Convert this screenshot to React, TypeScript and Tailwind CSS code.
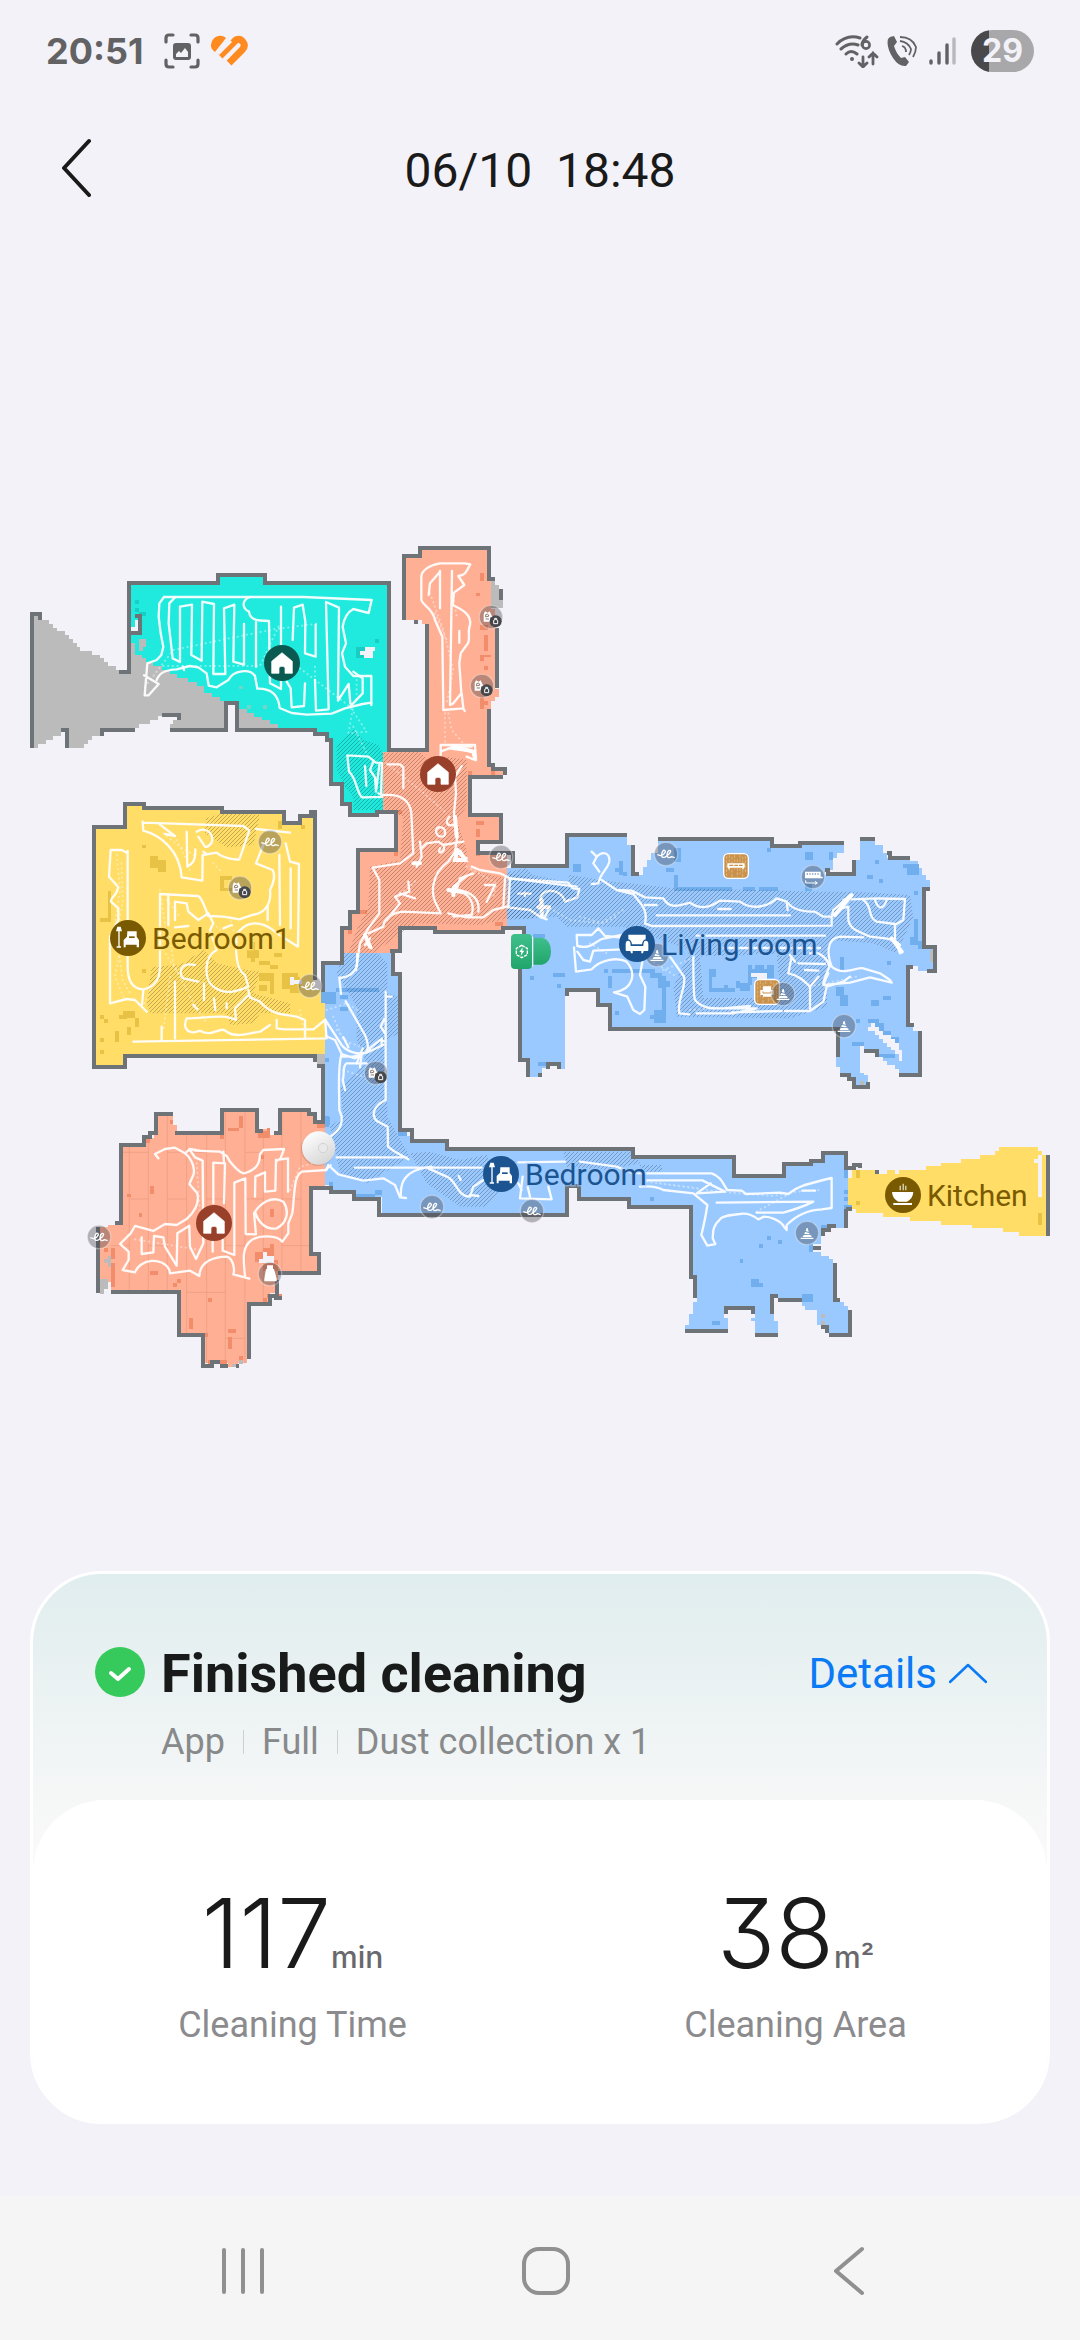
import type { ReactNode } from 'react'

const C = {
  bg: '#F3F2F8',
  wall: '#6E7377',
  grey: '#BBBBBB',
  teal: '#20E9DE',
  blue: '#99C9FF',
  blueDark: '#70AEEE',
  orange: '#FFB094',
  orangeDark: '#F28D6C',
  yellow: '#FFDD66',
  yellowDark: '#E8C245',
}

type Rect = [number, number, number, number]

// Map tiles are drawn on a grid three times finer than the map itself
function Tile({ x, y, children }: { x: number; y: number; children: ReactNode }) {
  return <g transform={`translate(${x} ${y}) scale(0.33333)`}>{children}</g>
}

function Wall({ d }: { d: string }) {
  return <path d={d} fill="none" stroke={C.wall} strokeWidth={12} shapeRendering="crispEdges" />
}

function Fill({ d, color }: { d: string; color: string }) {
  return <path d={d} fill={color} shapeRendering="crispEdges" />
}

function Cells({ items, color }: { items: Rect[]; color: string }) {
  return (
    <g fill={color} shapeRendering="crispEdges">
      {items.map(([x, y, w, h]) => (
        <rect key={`${x}-${y}`} x={x} y={y} width={w} height={h} />
      ))}
    </g>
  )
}

function Hatch({ d }: { d: string }) {
  return <path d={d} fill="url(#hatch)" />
}

function Track({ d }: { d: string }) {
  return (
    <path d={d} fill="none" stroke="#fff" strokeWidth={7} strokeOpacity={0.92} strokeLinejoin="round" strokeLinecap="round" />
  )
}

function Dots({ d }: { d: string }) {
  return (
    <path d={d} fill="none" stroke="#fff" strokeWidth={6} strokeOpacity={0.4} strokeDasharray="1 13" strokeLinecap="round" />
  )
}

function Floors() {
  return (
    <>
      {/* Teal room and the unexplored area beside it */}
      <Tile x={20} y={540}>
        <Fill color={C.grey} d="M42 228H66V240H87V252H99V264H111V273H135V285H147V297H159V309H171V321H180V333H216V345H240V354H252V366H264V378H288V390H333V309H400V370H774V564H648V490H618V564H450V552H459V540H471V528H414V540H390V552H357V564H240V588H216V600H204V612H192V624H147V570H123V588H99V600H78V612H54V624H42Z" />
        <Fill color={C.teal} d="M333 135H600V111H729V135H1101V636H1089V822H995V788H970V735H936V600H920V576H885V564H774V552H750V540H727V530H703V518H680V507H656V484H600V472H576V460H552V437H530V426H505V413H470V402H450V390H426V378H400V366H378V354H365V345H345V309H333Z" />
        <Fill color={C.bg} d="M318 262H345V240H357V273H318Z" />
        <Cells color="#18CDC2" items={[[345, 180, 12, 12], [345, 204, 12, 12], [357, 216, 21, 12], [1008, 320, 28, 34], [1065, 297, 12, 12]]} />
        <Cells color={C.grey} items={[[357, 297, 21, 24], [357, 320, 12, 12]]} />
        <Cells color="#70D6CC" items={[[657, 437, 12, 10], [681, 495, 12, 12], [729, 495, 13, 12]]} />
        <Fill color={C.bg} d="M1020 332H1036V320H1065V332H1060V354H1032V345H1020Z" />
        <Hatch d="M1000 565L1030 600 1075 615 1089 640V810H1000V770L975 740 950 690 950 620Z" />
        <Wall d="M36 624V222H60V240" />
        <Wall d="M297 396H327V129H594V105H735V129H1107V630H1140" />
        <Wall d="M321 278H360V228H345" />
        <Wall d="M141 624V570H123M246 588V570H345M426 525H477V540M450 570H618V490H652V570H885V582H921V600H932V733H966V792H990V826H1071V816H1119" />
        <Dots d="M375 440L460 330 760 268 900 250M430 378H720L780 250M840 385L990 500 1040 575 985 580 1000 500M885 380V430M1010 420V490M1000 560L1040 640" />
        <Track d="M432 171L418 190 416 230 422 280 430 320 424 345 410 360 382 370 374 466H386L416 432 372 406M410 420C420 395 440 390 470 388L510 378 535 382 560 400 566 437 590 442 625 420C640 390 690 385 705 408L712 446C750 445 775 460 779 504L815 519 860 524 935 521 975 505 1028 492 1054 488V408H1000L975 380 966 340 978 310 968 260C972 235 985 215 1000 207L1046 219 1055 180 850 171H432" />
        <Track d="M466 171L448 190 446 250 458 355 480 366 480 200 516 194 514 345 545 362 547 185 582 192 580 402H616L612 205 643 194 640 365 672 374V252M690 171C665 180 665 205 687 215 690 240 710 243 747 243L750 430 783 447V200M708 247V380M800 425L812 445 815 502 852 498 855 430M818 300L822 203 848 194 856 245 855 340 887 350V254M885 420L888 512 926 508 918 186 957 203 954 482 986 432 991 490M1000 395L1028 415V460L990 500M1054 488V495M490 380L492 390" />
        <Track d="M982 646L1045 650 1068 668 1140 672M982 646L987 695C1010 715 1010 760 1026 772L1140 770M1035 678L1039 738M1060 665L1050 690 1065 712 1068 755 1078 675M1083 765L1086 675H1102L1092 765 1075 760" />
      </Tile>

      {/* Hallway, second bedroom */}
      <Tile x={300} y={930}>
        <Fill color={C.blue} d="M132 65H275V130H295V605H320V617H335V637H440V660H1000V685H1090V830H990V800H840V770H800V850H245V800H165V780H92V765H70V185H75V98H132Z" />
        <Fill color={C.yellow} d="M0 0H39V205H64V222H75V373H0Z" />
        <Cells color={C.grey} items={[[51, 373, 24, 36]]} />
        <Cells color={C.blueDark} items={[[108, 174, 130, 12], [64, 186, 44, 36], [120, 195, 24, 12], [120, 232, 24, 12], [75, 383, 12, 12], [75, 560, 14, 24], [225, 780, 20, 14], [165, 792, 60, 10], [295, 605, 25, 12], [690, 138, 12, 12], [1050, 800, 12, 12]]} />
        <Hatch d="M132 70H235L262 100V190L295 200V310L262 330V560L330 680 200 760 120 730 90 590 130 560 120 470 200 400 170 330 170 230 110 130Z" />
        <Hatch d="M330 670L390 665 480 690 560 675 600 780 560 830 480 830 380 760ZM790 665H1000L1020 700 920 720 800 710Z" />
        <Wall d="M69 185V98H126V0M45 0V150M300 0V62H279V133H300V600H335V632H441V657H998V681H1080" />
        <Wall d="M0 378H45V395M51 408H69V575H45V552H26V540H0M34 900V774H92V786H163V807H237V855H801V768H837V806H987V831H1080" />
        <Dots d="M80 240L140 220 190 250M100 260L130 330 180 350M110 300L150 345M130 420L190 440" />
        <Track d="M200 20L172 60 171 105C165 130 140 145 118 143L123 192M137 214L195 315C205 340 205 355 200 362L240 330 255 335M257 185V510C215 530 215 560 232 574L263 590 264 650 280 662 325 688M257 200H275M252 268L242 290 255 310M75 268L125 345C140 365 170 375 200 368L250 345M75 268L77 318 105 330 125 372 165 385 210 360M125 372C112 410 118 480 118 540L125 560C128 595 105 610 88 622M128 380H160L185 372 180 412M200 400H140C125 410 135 430 128 450L135 480M110 682H320M165 713H545M90 710L115 733 190 752 250 745 285 765 300 802 318 804M303 800C300 760 310 720 395 710L385 715 440 740C470 750 470 800 510 800L520 770 550 750M510 795L535 798M476 738L482 750M0 728L75 720 92 706" />
        <Track d="M130 322L145 352M188 355L170 400M245 345V325M655 697L795 695M668 740L660 805 755 808 745 770M683 770L690 800M655 760L665 780M840 695L950 710 1000 730 1080 725M1040 750H1080" />
      </Tile>

      {/* Yellow bedroom */}
      <Tile x={80} y={790}>
        <Fill color={C.yellow} d="M48 118H141V48H188V60H425V72H607V100H660V82H690V72H699V600H723V640H735V793H130V827H48Z" />
        <Cells color={C.yellowDark} items={[[186, 165, 12, 10], [210, 198, 24, 36], [234, 210, 24, 35], [84, 303, 9, 93], [60, 383, 24, 13], [420, 258, 36, 45], [594, 93, 12, 24], [662, 105, 13, 12], [186, 537, 12, 12], [60, 675, 12, 12], [72, 687, 12, 12], [130, 662, 35, 23], [118, 675, 24, 12], [165, 685, 12, 26], [105, 723, 12, 32], [142, 711, 11, 24], [60, 744, 12, 12], [60, 780, 12, 12], [502, 480, 36, 24], [514, 455, 12, 60], [538, 513, 32, 12], [582, 489, 24, 12], [570, 525, 24, 12], [537, 548, 45, 24], [570, 560, 12, 52], [537, 584, 25, 20], [607, 548, 48, 50], [630, 560, 30, 50]]} />
        <Cells color={C.yellow} items={[[432, 270, 24, 24]]} />
        <Cells color={C.bg} items={[[630, 560, 12, 24], [630, 570, 36, 12]]} />
        <Hatch d="M378 85L430 70 540 75 520 165 440 172 375 130ZM215 530L300 525 370 480 410 520 500 540 540 545 520 610 630 640V670H540L520 700 450 705 440 670H210L200 640Z" />
        <Wall d="M42 832V111H135V42H192V54H426V66H612V98H660V77H692V66H705V550" />
        <Wall d="M36 832H135V798H705V815" />
        <Dots d="M110 195L120 300 105 400 120 480 105 560 130 620M240 300L255 400 245 480M250 130L300 170 350 200M260 330L300 380M400 400L440 440 450 480M250 480L300 560M660 660L670 720M270 560L250 720M210 600L190 650M420 240L400 220M450 380L470 460" />
        <Dots d="M125 220L128 340 112 420M118 500L128 570 150 610M290 150L320 210 330 240M270 440L280 520 320 600M330 620L380 700" />
        <Track d="M188 95L190 122C240 135 300 180 305 262L367 272 368 195 410 188C430 205 465 210 478 208L508 122 490 108 190 98M235 100L285 138 255 132M320 125L322 230C335 222 347 215 346 178M350 125C365 115 390 115 397 145 398 165 380 172 375 170L355 140M370 185L380 192M630 128L528 117M550 165L528 220 578 240C588 260 580 280 570 300 575 340 555 370 520 374L478 388 430 380 385 378C370 340 362 315 350 318L240 312V530C240 580 210 595 190 598 165 597 143 580 143 530V183M143 190L125 180 92 180 87 260 114 290C112 320 90 320 93 335L115 355V390L90 440V640L140 627 165 630 200 665M190 600L186 645M598 195L600 405M617 160L630 215 657 222 654 470 590 430C560 400 520 390 490 412M632 235V415" />
        <Track d="M265 318V405M285 390V335L320 340 325 365 355 390 385 370 400 400 390 420 410 480C370 500 372 570 400 590 440 620 480 600 505 590L495 555C470 540 465 490 470 430L490 412M505 600L510 622 540 635C580 680 620 672 650 680L675 690V745M505 615L465 655 468 690C430 670 380 685 320 685 305 720 330 735 360 722 400 745 420 705 440 725 470 745 500 730 540 725L570 705M590 690V715L612 718H700L735 690 740 745 160 755M285 575V745M245 710V750M345 525C300 515 295 550 310 565L355 575M372 580V630M402 625L406 660M340 645L352 658M440 640V655M430 415L455 405M563 350V390M285 412L325 408" />
      </Tile>

      {/* Living room */}
      <Tile x={490} y={820}>
        <Fill color={C.blue} d="M50 145H237V51H411V75H423V165H460V140H470V120H483V98H505V63H845V82H930V75H1062V98H1040V115H1030V150H1005V165H1097V120H1110V63H1155V75H1178V98H1190V115H1260V123H1283V145H1295V165H1308V180H1320V204H1297V375H1330V447H1310V454H1285V437H1248V612H1270V633H1285V760H1228V747H1215V735H1192V723H1180V711H1168V700H1122V765H1134V795H1095V782H1085V770H1050V740H1038V627H366V560H330V515H225V747H210V735H170V745H155V770H118V725H95V330H50Z" />
        <Cells color={C.blueDark} items={[[250, 133, 22, 22], [388, 122, 12, 44], [376, 143, 12, 12], [400, 155, 12, 12], [552, 85, 20, 40], [528, 143, 24, 12], [552, 165, 12, 48], [564, 202, 161, 11], [760, 202, 35, 11], [808, 202, 55, 11], [831, 85, 12, 11], [945, 96, 24, 23], [945, 190, 20, 23], [1017, 96, 12, 23], [1155, 120, 12, 12], [1130, 165, 18, 12], [1168, 177, 12, 12], [1238, 133, 50, 12], [1250, 145, 36, 21], [1272, 213, 12, 12], [1272, 296, 12, 78], [1260, 350, 12, 24], [1285, 363, 12, 24], [1192, 423, 12, 12], [120, 468, 12, 12], [190, 459, 35, 12], [201, 492, 12, 12], [342, 447, 12, 12], [366, 447, 130, 12], [354, 468, 12, 35], [480, 459, 35, 16], [505, 468, 22, 36], [515, 492, 13, 110], [528, 483, 12, 18], [480, 586, 24, 10], [492, 570, 36, 38], [376, 573, 11, 12], [1050, 411, 12, 40], [1038, 500, 24, 28], [1050, 525, 24, 34], [1143, 540, 25, 18], [1180, 528, 23, 12], [1097, 597, 12, 12], [1134, 597, 34, 12], [1155, 609, 26, 24], [1180, 633, 24, 24], [1192, 650, 36, 26], [1168, 702, 47, 12], [1087, 667, 35, 11], [145, 727, 24, 12], [130, 342, 36, 12]]} />
        <Fill color={C.bg} d="M1143 609H1155V621H1168V633H1180V645H1204V657H1216V669H1228V690H1237V723H1228V702H1216V690H1204V680H1192V669H1180V657H1168V645H1155V633H1134V621H1143ZM1110 678H1122V700H1168V711H1180V723H1192V735H1215V760H1110Z" />
        <Hatch d="M55 155L110 145 130 165 230 185 240 165 370 185 420 190 550 205 1000 215 1100 215 1260 225 1270 290 1220 400 1150 370 1020 360 1010 560 900 595 560 590 550 500 600 390 400 320 230 320 200 290 50 300Z" />
        <Fill color={C.blue} d="M630 410L860 400 870 500 800 535 640 535Z" />
        <Cells color={C.blueDark} items={[[658, 447, 19, 24], [657, 471, 10, 44], [665, 504, 70, 12], [702, 494, 12, 12], [737, 482, 12, 22], [750, 490, 30, 24], [773, 435, 12, 12], [796, 435, 25, 12], [832, 435, 20, 12], [773, 447, 78, 28], [773, 475, 12, 20]]} />
        <Fill color={C.bg} d="M782 459H830V483H800V470H782Z" />
        <Wall d="M70 108V138H231V45H411M429 75V161H447M505 57H846V78H930V69H1062M1005 150H1014V161H1091V120M1110 57H1155M1190 98H1200V114H1260M1320 208H1303V380H1334V453H1310M1270 441H1254V615H1272M1290 633V765H1228M1122 694H1160V712M1134 785V801H1092V776H1078V765H1050M1044 710V627H360V555H324V510H231V527" />
        <Wall d="M0 329H21V323H101V342M91 447V720H114V770M145 765H155M168 740H174V733H207V747" />
        <Cells color={C.grey} items={[[1320, 390, 8, 36], [1110, 783, 12, 12]]} />
        <Dots d="M180 265L240 300 330 310 400 270M270 290L340 310 380 290M300 370L350 400M480 420L560 470M600 570L760 560M960 500L1100 470M520 450L620 410" />
        <Track d="M55 175L235 188 248 205 268 207 262 232 225 245C215 205 155 200 150 240M150 255L178 265 165 290M55 262L120 270 150 290 170 298M105 218V228M85 221H122M305 95L320 110C340 90 360 100 358 125 355 145 330 160 325 190L305 192M320 110L310 130 328 155M335 180L380 210 430 222C450 250 475 265 465 310L485 318 1025 317 1025 290M380 210L425 212 465 232 520 235C540 270 570 255 600 248 640 275 670 255 690 242L750 245C790 275 840 255 860 235L890 245 893 270M895 250C910 270 940 275 975 275L1000 290H1025L1030 270 1085 228 1060 240M1025 290L1055 265 1075 260V300C1080 330 1110 335 1140 350 1180 355 1215 355 1230 375M1030 270L1080 225M500 286H900M465 255H500M685 267H722M620 347H1005M700 384H990M1085 238L1160 235 1245 237 1240 300 1215 315V360L1230 400M1120 240C1150 260 1130 290 1160 305L1215 312M1155 240C1165 270 1180 270 1190 240" />
        <Track d="M260 345H305L325 325 345 348 390 352 405 340M260 345L262 378C310 390 320 355 345 355L395 345M252 382L258 455 305 448C330 420 380 410 410 425 440 460 430 510 372 517L412 530 430 570 450 582 463 570 466 500 450 465 458 420M262 395L280 420 300 425 310 392 400 388M540 410L582 470C590 500 560 540 568 580L598 583M610 400C610 450 610 530 615 540 640 570 680 565 700 565L780 558M620 580L730 580 800 565 700 565M725 577L875 573M885 573H960L1000 545 1010 500 1060 485 1080 470M960 570V500M905 410L895 460C925 465 945 485 960 500L985 470M900 405L915 425M960 400C990 390 1015 420 1018 440 1010 460 1000 480 1000 492M925 430L1005 432M945 450L985 452M1025 440C1010 400 1010 355 1050 350L1120 352M1025 440C1060 470 1100 440 1120 445L1170 460 1200 480 1205 488 1140 472 1080 488 1000 495 1015 460" />
        <path d="M1035 285L1085 225M1205 355L1235 395M155 240V290M145 262H178" fill="none" stroke="#fff" strokeWidth={12} strokeLinecap="round" />
      </Tile>

      {/* Entrance corridor */}
      <Tile x={320} y={530}>
        <Fill color={C.grey} d="M513 153H525V165H537V178H549V235H513ZM270 258H294V270H270Z" />
        <Fill color={C.orange} d="M306 60H504V153H513V237H525V477H537V500H525V513H513V537H504V712H525V724H549V736H444V861H537V937H468V966H561V1189H549V1200H345V1189H234V1268H72V1200H84V1175H96V1150H120V966H234V841H188V665H327V283H306V270H258V84H306Z" />
        <Cells color={C.orangeDark} items={[[480, 129, 12, 24], [468, 188, 12, 10], [480, 285, 24, 16], [492, 315, 12, 48], [480, 375, 33, 7], [480, 382, 12, 12], [492, 408, 12, 12], [480, 500, 12, 36], [492, 513, 12, 12], [468, 873, 24, 12], [468, 897, 12, 24], [513, 724, 12, 12], [444, 724, 12, 12], [212, 841, 34, 11], [222, 966, 12, 12], [468, 966, 12, 12], [120, 1140, 21, 12], [84, 1200, 12, 12], [525, 1177, 24, 12]]} />
        <Hatch d="M190 668L300 665 330 700 380 680 440 690V830L410 870 440 960V1020L561 1045V1165L480 1185 290 1180 160 1268H85L110 1200 145 1130 150 1010 240 990 250 860 190 835ZM561 1030L625 1040 740 1065 780 1100 700 1130 640 1165H561Z" />
        <Wall d="M252 270V78H300V54H508V147H525M543 178V210M282 276H294M315 289H321V659H206M531 295V475M508 537V706H519V718H555V735M549 741H450V856H543V937H474V970H578V1008H741V916H780" />
        <Wall d="M177 847H228V960H114V1146H90V1195H66V1298H9V1320M217 1268V1262H240V1195H345V1206H549V1195H612V1212" />
        <Dots d="M330 190L370 300 400 420 380 520M345 250L380 330M400 200L410 260M375 550V640M385 550L395 600 430 640M200 700L300 780 380 850M440 1010L530 1060 520 1100M230 1100L290 1050 260 1080" />
        <Track d="M360 100H435L451 103C440 120 440 135 415 138L433 165 402 188 398 225C430 240 455 255 450 285 440 310 455 330 440 345L422 370 418 400 424 490 400 520 390 525 396 123M360 100C330 105 305 120 304 140V210C310 230 335 230 345 270L367 320 370 540 430 535 425 490M360 123V235M360 125L330 160 326 195M418 303V338M430 535L434 543M362 680V645H465L468 690M362 665L400 650M385 655L460 665M395 650H455M440 680L465 690" />
        <Track d="M203 703H240L250 712V775M190 795C250 790 270 815 274 850L280 970 240 1000 158 1013 178 1050V1150L145 1195 120 1240 108 1320M425 708L405 740 408 790 402 850 412 920 405 965 440 985M388 860C375 875 380 890 400 885M348 905C350 885 375 890 375 905 380 925 350 925 348 905M360 955C350 975 375 970 372 950M300 935L305 980 290 1010M305 955L320 940 355 935 370 945 430 935M405 965L385 995C335 1030 330 1090 350 1125L362 1150 250 1145C210 1150 190 1170 190 1190L145 1210M265 1055L268 1085 225 1100 240 1120 200 1170M240 1090L285 1105M455 1010L480 1020 540 1030 570 1045 770 1070M440 1038L400 1070 395 1085C450 1080 465 1120 455 1155L400 1160M460 1030L420 1045 410 1080C460 1085 480 1110 475 1145M495 1065L525 1065 500 1115M385 1150L440 1162 490 1162 520 1140 560 1130M555 1045L550 1130M570 1045L565 1130M135 1245L150 1225M140 1240L155 1255" />
        <path d="M400 650L460 665 465 685M385 1080L425 1085M405 1070L400 1095M412 960L405 990 435 990 420 965M280 1000H300M405 860L410 920M135 1215L150 1250" fill="none" stroke="#fff" strokeWidth={12} strokeLinecap="round" />
      </Tile>

      {/* Orange room */}
      <Tile x={80} y={1080}>
        <Fill color={C.orange} d="M234 108H279V135H290V155H300V165H432V96H525V147H560V165H606V96H680V105H700V130H725V135H735V318H687V525H710V573H594V640H570V665H501V850H475V860H445V850H370V770H303V640H93V605H60V440H84V435H129V200H195V175H222V160H234Z" />
        <path d="M148 200V640M205 165V640M262 108V640M320 165V770M380 165V850M436 96V850M495 96V850M550 160V665M606 96V573M663 96V573M129 217H205M262 217H380M495 217H550M148 357H205M262 357H320M380 357H436M495 357H550M606 357H663M93 497H148M205 497H262M436 497H495M606 497H687M148 637H262M320 637H436M436 775H495" fill="none" stroke="#E8967C" strokeWidth={3} strokeOpacity={0.6} />
        <Cells color={C.orangeDark} items={[[270, 120, 10, 12], [477, 108, 12, 36], [444, 143, 33, 10], [420, 165, 12, 11], [535, 153, 36, 22], [560, 145, 10, 12], [198, 176, 12, 13], [210, 318, 12, 24], [141, 342, 12, 10], [177, 399, 10, 12], [570, 387, 12, 24], [541, 225, 12, 12], [93, 504, 12, 32], [93, 550, 12, 70], [72, 504, 12, 12], [210, 573, 24, 12], [291, 597, 12, 12], [279, 609, 12, 12], [384, 654, 12, 12], [327, 714, 12, 32], [444, 747, 24, 12], [444, 771, 12, 35], [372, 759, 12, 12], [525, 516, 57, 30], [550, 504, 32, 14], [571, 493, 11, 12], [550, 540, 44, 32], [594, 642, 12, 12], [560, 642, 12, 12], [550, 654, 12, 11], [711, 130, 24, 14], [384, 841, 12, 12], [420, 840, 22, 12], [477, 828, 12, 12]]} />
        <Cells color={C.grey} items={[[60, 597, 24, 30], [60, 625, 12, 16], [72, 538, 12, 10], [84, 528, 8, 32], [477, 840, 12, 12], [456, 852, 12, 10]]} />
        <Fill color={C.bg} d="M550 516H560V528H582V550H538V538H550Z" />
        <Cells color={C.blueDark} items={[[735, 108, 12, 34], [747, 306, 12, 14]]} />
        <Wall d="M279 102H228V159H210V171H192V195H123V429H105M291 153V159H426V90H531V153H550M582 159H600V90H687V102H705V125H730V0M54 640V440M93 636H297V765H369V857H396V847H420M420 857H444M468 857H477M507 838V671H570V648H590V600M582 655H606M594 579H717V522H692V324H753V336H780" />
        <Dots d="M165 478L360 510M350 250L360 400M630 330L660 260 700 250" />
        <Track d="M235 235L225 222 255 207 285 203 315 220C340 240 345 270 340 285L328 312 352 340C360 370 340 400 320 417L290 435 255 432 220 453 165 438 152 460 120 492 146 515V540L128 570 165 577C180 535 250 530 268 570L270 580 330 572 358 588C360 540 410 530 440 530 460 535 465 570 460 583L508 596M495 588C490 540 485 500 515 480 540 465 590 465 607 485L625 460V430L637 400C645 340 640 290 665 275L740 270 745 255M315 220L330 207 358 212M328 207L345 232 368 242 370 490 348 537 330 500 328 437 292 460 290 557 255 500 250 472 222 468 220 517 185 522V472M345 212L420 215 440 228C450 250 480 280 492 280 530 270 540 250 540 222L550 210 612 207 602 235 588 245M400 370V248L435 250 432 370M428 480V512L463 525V308L496 295 497 462 528 463 522 400C540 370 575 345 610 365 630 395 620 430 590 445 560 450 535 430 525 395M398 485V515M525 350L526 290 555 277V335L586 332 588 240 624 235V335M430 215L432 245" />
      </Tile>

      {/* Bedroom end and kitchen */}
      <Tile x={640} y={1110}>
        <Fill color={C.blue} d="M0 147H276V204H438V169H519V159H549V135H612V180H624V300H612V354H588V345H543V402H519V425H543V437H567V447H579V575H612V588H624V670H567V657H545V645H531V600H495V588H486V563H402V633H414V670H345V633H333V624H345V600H252V624H264V657H135V645H147V612H159V575H171V500H159V285H0Z" />
        <Fill color={C.yellow} d="M624 204H636V169H648V180H705V192H741V180H765V192H778V180H858V169H903V159H963V147H1020V135H1065V123H1077V111H1194V123H1206V135H1218V378H1137V366H1089V354H996V345H903V333H810V320H729V309H648V297H624Z" />
        <Fill color={C.bg} d="M1194 135H1206V262H1194V159H1182V147H1194Z" />
        <Cells color={C.blueDark} items={[[30, 261, 12, 12], [612, 180, 12, 24], [612, 240, 12, 12], [612, 261, 12, 11], [612, 285, 24, 12], [381, 378, 12, 12], [357, 402, 12, 12], [414, 390, 12, 12], [300, 447, 9, 12], [333, 507, 24, 24], [357, 519, 12, 12], [216, 633, 24, 12], [486, 552, 33, 24], [543, 345, 24, 20], [507, 402, 12, 24]]} />
        <Cells color={C.yellowDark} items={[[648, 180, 12, 24], [648, 273, 12, 12], [1194, 309, 12, 36]]} />
        <Cells color={C.grey} items={[[543, 612, 12, 12], [543, 633, 12, 12]]} />
        <Hatch d="M0 165H66V185H0Z" />
        <Wall d="M0 141H282V198H432V163H513V153H549V129H618V174H648M636 165H660V175M705 186H717M618 297H636M618 297V354M588 349H567V359H549V378M519 413H543M584 459V570H600M630 600V675H567M549 645V651H561V669M414 675H345M339 612V594H258V612M264 663H135M165 563V500H153V291H0M397 612V558H414M414 570H486M1224 135V378" />
        <Dots d="M20 215L240 245 400 258 470 245 540 240M350 305L450 250M60 220L180 235" />
        <Track d="M0 190H215C245 200 250 225 262 240L305 242 318 252 420 248 445 252C470 230 490 225 575 204V294L545 298C500 300 470 315 440 345V360L432 350C420 330 390 320 372 320L355 328C330 310 310 310 300 312 270 315 245 318 240 328 215 350 220 370 218 385L226 402 202 407 184 375C195 330 200 300 202 285L160 250 70 240C50 228 20 228 0 230M20 211H187L255 245 170 250 212 220M230 278L520 275C490 290 460 300 430 308H350M487 242H525" />
      </Tile>
    </>
  )
}

function HomeGlyph() {
  return <path d="M0 -31L31 -5V31H9V16Q9 10 0 10T-9 16V31H-31V-5Z" fill="#fff" stroke="#fff" strokeWidth={2} strokeLinejoin="round" />
}

function BedGlyph() {
  return (
    <g fill="#fff">
      <path d="M-32 -34H-22L-18 -20H-25V25H-21V29H-34V25H-29V-20H-36ZM-2 -20H26V-4L33 6V28H26V20H-7V28H-13V6L-3 -4Z" />
      <path d="M3 -5H20V0H3Z" fill="currentColor" />
    </g>
  )
}

function SofaGlyph() {
  return (
    <g fill="#fff">
      <path d="M-26 -28H26V-14Q17 -12 15 1H-15Q-17 -12 -26 -14Z" />
      <path d="M-26 -10Q-19 -10 -19 6H19Q19 -10 26 -10Q34 -10 34 0V18Q34 21 31 21H20L18 28H13V21H-13V28H-18L-20 21H-31Q-34 21 -34 18V0Q-34 -10 -26 -10Z" />
    </g>
  )
}

function BowlGlyph() {
  return (
    <g fill="#fff">
      <path d="M-33 -9H31Q30 10 12 20H-14Q-32 10 -33 -9ZM-29 24H27V30H-29ZM-10 -28H-7V-14H-10ZM-1 -34H2V-14H-1ZM7 -28H10V-14H7Z" />
    </g>
  )
}

const glyphs = { home: HomeGlyph, bed: BedGlyph, sofa: SofaGlyph, bowl: BowlGlyph }

interface Room {
  x: number
  y: number
  icon: keyof typeof glyphs
  color: string
  name?: string
  halo?: string
}

const rooms: Room[] = [
  { x: 282, y: 663, icon: 'home', color: '#0B5A52' },
  { x: 438, y: 774, icon: 'home', color: '#98402A' },
  { x: 214, y: 1223, icon: 'home', color: '#98402A' },
  { x: 128, y: 938, icon: 'bed', color: '#7A5A00', name: 'Bedroom1', halo: '#FFDD66' },
  { x: 637, y: 944, icon: 'sofa', color: '#1B5490', name: 'Living room', halo: '#99C9FF' },
  { x: 501, y: 1174, icon: 'bed', color: '#1B5490', name: 'Bedroom', halo: '#99C9FF' },
  { x: 903, y: 1195, icon: 'bowl', color: '#7A5A00', name: 'Kitchen', halo: '#FFDD66' },
]

function RoomMarker({ x, y, icon, color, name, halo }: Room) {
  const Glyph = glyphs[icon]
  return (
    <g>
      <g transform={`translate(${x} ${y}) scale(0.33333)`} color={color}>
        <circle r={54} fill={color} />
        <Glyph />
      </g>
      {name && (
        <text
          x={x + 24}
          y={y + 11}
          fontSize={30}
          fill={color}
          stroke={halo}
          strokeWidth={3}
          strokeOpacity={0.6}
          paintOrder="stroke"
        >
          {name}
        </text>
      )}
    </g>
  )
}

type ObstacleKind = 'cable' | 'locked' | 'pile' | 'strip' | 'bin'

const obstacles: [number, number, ObstacleKind][] = [
  [491, 617, 'locked'], [482, 686, 'locked'], [240, 888, 'locked'], [376, 1073, 'locked'],
  [501, 857, 'cable'], [270, 842, 'cable'], [310, 986, 'cable'], [666, 854, 'cable'],
  [432, 1207, 'cable'], [532, 1211, 'cable'], [99, 1237, 'cable'],
  [657, 955, 'pile'], [783, 994, 'pile'], [844, 1026, 'pile'], [807, 1233, 'pile'],
  [813, 877, 'strip'], [270, 1274, 'bin'],
]

function Obstacle({ x, y, kind }: { x: number; y: number; kind: ObstacleKind }) {
  return (
    <g transform={`translate(${x} ${y}) scale(0.33333)`}>
      <circle r={35} fill="#3C3C46" fillOpacity={0.36} stroke="#fff" strokeOpacity={0.35} strokeWidth={4} />
      {kind === 'cable' && (
        <path d="M-26 2L-16 5Q-6 3 -2 -6Q-2 -13 -8 -11Q-15 -2 -12 8Q-6 13 2 6Q13 -1 14 -8Q11 -14 6 -8Q0 4 6 10Q11 12 17 8L26 11" fill="none" stroke="#fff" strokeWidth={4} />
      )}
      {kind === 'pile' && (
        <path d="M-19 14H19V18H-19ZM-13 12Q-13 7 -8 6H10Q14 8 14 12ZM-8 3L-6 -3L7 0L8 4ZM-4 -6L-1 -15H2L5 -3Z" fill="#fff" />
      )}
      {kind === 'strip' && (
        <>
          <path d="M-24 -16H23V-1H29V4H-24Z" fill="#fff" />
          <path d="M-19 -9H20" stroke="#7F9BBF" strokeWidth={4} strokeDasharray="4 4" />
          <path d="M-22 10V18H12M6 13L13 18L6 22" fill="none" stroke="#fff" strokeWidth={3} />
        </>
      )}
      {kind === 'bin' && <path d="M-9 -26H9V-15H12L20 14V22H-17V14L-12 -15H-9Z" fill="#fff" />}
      {kind === 'locked' && (
        <>
          <path d="M-22 -8L-18 -17L-10 -13L-4 -17L2 -4L8 0V14H-22Z" fill="#fff" />
          <path d="M-16 -7L-10 -9L-6 -3L-16 0ZM-16 6H-6M-1 1V8" fill="none" stroke="#8E7970" strokeWidth={3} />
          <circle cx={14} cy={13} r={18} fill="#46474B" />
          <path d="M8 10V20H20V10L14 7ZM11 8V4H17V8" fill="none" stroke="#fff" strokeWidth={3} />
        </>
      )}
    </g>
  )
}

function Furniture({ x, y, children }: { x: number; y: number; children: ReactNode }) {
  return (
    <g transform={`translate(${x} ${y}) scale(0.33333)`}>
      <rect x={-37} y={-37} width={74} height={74} rx={14} fill="#C9924C" stroke="#fff" strokeWidth={4} />
      <path d="M-28 -30V30M-20 -33V20M-12 -28V33M-4 -33V10M4 -20V33M12 -33V25M20 -28V33M28 -30V20" stroke="#E0B376" strokeWidth={3} strokeDasharray="9 4" />
      {children}
    </g>
  )
}

function CleaningMap() {
  return (
    <svg viewBox="0 402 1080 1000" className="w-full font-[Roboto,sans-serif]" role="img" aria-label="Cleaning map">
      <defs>
        <pattern id="hatch" width={12} height={12} patternUnits="userSpaceOnUse">
          <path d="M-3 15L15 -3M-3 3L3 -3M9 15L15 9" stroke="#000" strokeOpacity={0.24} strokeWidth={3} />
        </pattern>
        <linearGradient id="dock" x1={0} y1={0} x2={0} y2={1}>
          <stop offset={0} stopColor="#3FBF8C" />
          <stop offset={1} stopColor="#22A56B" />
        </linearGradient>
        <linearGradient id="robot" x1={0.2} y1={0} x2={0.8} y2={1}>
          <stop offset={0} stopColor="#FFFFFF" />
          <stop offset={1} stopColor="#D4D4D4" />
        </linearGradient>
      </defs>

      <Floors />

      <Furniture x={736} y={866}>
        <path d="M-26 -8H26V5H23V10H19V5H-19V10H-23V5H-26Z" fill="#fff" />
        <path d="M-20 -2H-8M-5 -2H6M9 -2H20" stroke="#C9924C" strokeWidth={4} />
      </Furniture>
      <Furniture x={767} y={992}>
        <path d="M-12 -17H12V-6H20V9H12V14H-12V9H-20V-6H-12Z" fill="#fff" />
        <path d="M-12 -2V3H12V-2" fill="none" stroke="#C9924C" strokeWidth={3} />
      </Furniture>

      {obstacles.map(([x, y, kind]) => (
        <Obstacle key={`${x}-${y}`} x={x} y={y} kind={kind} />
      ))}

      {/* Dock */}
      <Tile x={490} y={820}>
        <path d="M130 353H157Q183 360 183 394T157 434H130Z" fill="url(#dock)" />
        <rect x={63} y={342} width={63} height={105} rx={12} fill="url(#dock)" />
        <path d="M128 350V440" stroke="#fff" strokeWidth={3} />
        <path d="M95 376L112 385V404L95 413L79 404V385Z" fill="none" stroke="#fff" strokeWidth={4} strokeDasharray="10 3" />
        <path d="M98 382L88 396H94L92 408L103 392H97Z" fill="#fff" />
      </Tile>

      {/* Robot */}
      <Tile x={80} y={1080}>
        <circle cx={714} cy={207} r={51} fill="#000" fillOpacity={0.12} />
        <circle cx={716} cy={204} r={50} fill="url(#robot)" />
        <circle cx={729} cy={204} r={14} fill="#E9E9E9" stroke="#D2D2D2" strokeWidth={3} />
      </Tile>

      {rooms.map(room => (
        <RoomMarker key={`${room.x}-${room.y}`} {...room} />
      ))}
    </svg>
  )
}

function StatusBar() {
  return (
    <div className="flex h-[102px] items-center justify-between pr-[46px] pl-[46px] text-[#626264]">
      <div className="flex items-center">
        <span className="font-[Inter,sans-serif] text-[36px] leading-none font-bold">20:51</span>
        <svg width="36" height="36" viewBox="0 0 36 36" className="ml-5" fill="none">
          <path d="M2 9V5Q2 2 5 2H9M27 2H31Q34 2 34 5V9M34 27V31Q34 34 31 34H27M9 34H5Q2 34 2 31V27" stroke="currentColor" strokeWidth="3.2" strokeLinecap="round" />
          <rect x="9" y="10" width="18" height="17" rx="3" fill="currentColor" />
          <path d="M12 24V21L15 18L17 20L21 15L24 19V24Z" fill="#F3F2F8" />
        </svg>
        <svg width="38" height="34" viewBox="0 0 38 34" className="ml-[10px]">
          <path d="M1 12C1 3 10 -1 16 4L5 18Q1 15 1 12Z" fill="#FF8A1F" />
          <path d="M10 22L26 6Q30 4 33 8Q36 12 32 16L19 29" fill="none" stroke="#FF8A1F" strokeWidth="7" />
          <path d="M8 20L21 7" stroke="#F3F2F8" strokeWidth="3" />
          <path d="M17 24L28 12" stroke="#F3F2F8" strokeWidth="3" strokeLinecap="round" />
        </svg>
      </div>
      <div className="flex items-center">
        <svg width="44" height="34" viewBox="0 0 44 34" fill="none" stroke="currentColor" strokeWidth="3" strokeLinecap="round">
          <path d="M2 10Q12 0 25 4M6 15Q14 8 23 11M11 20Q16 15 22 20" />
          <circle cx="17" cy="25" r="2" fill="currentColor" stroke="none" />
          <path d="M32 3Q27 7 27 11" />
          <circle cx="31" cy="11" r="3.6" strokeWidth="2.6" />
          <path d="M28 23V32M24 29L28 33L32 29M38 30V19M34 23L38 19L42 23" strokeWidth="2.8" />
        </svg>
        <svg width="30" height="32" viewBox="0 0 30 32" className="ml-2">
          <path d="M3 2L7 1L10 7L7 11Q9 18 14 23L18 22L22 27L19 31Q12 32 6 23Q-1 12 1 4Z" fill="currentColor" />
          <path d="M13 2Q25 2 29 12Q29 17 26 22M13 6Q21 7 24 14Q24 17 22 20M15 11Q19 12 19 17" fill="none" stroke="currentColor" strokeWidth="1.8" />
        </svg>
        <svg width="28" height="30" viewBox="0 0 28 30" className="ml-3" stroke="currentColor" strokeWidth="3.4" strokeLinecap="round">
          <path d="M2 25V27M10 17V27M18 9V27" />
          <path d="M25 3V27" strokeOpacity="0.4" />
        </svg>
        <div className="ml-[14px] flex h-[42px] w-[63px] items-center justify-center rounded-full bg-linear-to-r from-[#49494B] from-29% to-[#A8A8AA] to-29% font-[Inter,sans-serif] text-[32px] leading-none font-bold text-[#F3F2F8]">
          29
        </div>
      </div>
    </div>
  )
}

function Stat({ value, unit, label }: { value: string; unit: string; label: string }) {
  return (
    <div className="flex flex-col items-center">
      <p className="flex items-baseline font-[Inter,sans-serif] text-[#1A1A1A]">
        <span className="text-[96px] leading-none font-light [font-feature-settings:'cv09']">{value}</span>
        <span className="text-[30px] leading-none font-medium text-[#69696D]">{unit}</span>
      </p>
      <p className="mt-5 text-[36px] leading-[48px] text-[#8B8B8E]">{label}</p>
    </div>
  )
}

export default function App() {
  return (
    <div className="flex min-h-screen flex-col bg-[#F3F2F8] font-[Roboto,sans-serif]">
      <StatusBar />

      <header className="grid h-[130px] grid-cols-[1fr_auto_1fr] items-center px-14">
        <button aria-label="Back" className="flex size-14 items-center">
          <svg width="40" height="60" viewBox="0 0 40 60" fill="none" stroke="#1A1A1A" strokeWidth="4" strokeLinecap="round" strokeLinejoin="round">
            <path d="M33 4L8 31L33 58" />
          </svg>
        </button>
        <h1 className="pt-2 text-[48px] leading-none whitespace-pre text-[#1A1A1A]">06/10  18:48</h1>
      </header>

      <main className="flex flex-1 flex-col">
        <div className="flex flex-1 items-center">
          <CleaningMap />
        </div>

        <section className="mx-[30px] mb-[72px] overflow-hidden rounded-[72px] border-3 border-white bg-linear-to-b from-[#E0EDEE] to-[#FAF9F9] to-50%">
          <div className="flex items-start gap-4 pt-[68px] pr-[60px] pb-[34px] pl-[62px]">
            <svg width="50" height="50" viewBox="0 0 50 50" className="my-[5px] shrink-0">
              <circle cx="25" cy="25" r="25" fill="#36CA5D" />
              <path d="M16 26L23 32L34 22" fill="none" stroke="#fff" strokeWidth="4" strokeLinecap="round" strokeLinejoin="round" />
            </svg>
            <div className="flex-1">
              <h2 className="text-[54px] leading-[64px] font-bold text-[#191A1A]">Finished cleaning</h2>
              <div className="mt-3 flex items-center text-[36px] leading-[48px] text-[#88898B]">
                <span>App</span>
                <span className="mx-[18px] h-6 w-px bg-[#CDD1D2]" />
                <span>Full</span>
                <span className="mx-[18px] h-6 w-px bg-[#CDD1D2]" />
                <span>Dust collection x 1</span>
              </div>
            </div>
            <button className="flex items-center gap-3 text-[42px] leading-[64px] text-[#0A7AF5]">
              Details
              <svg width="38" height="22" viewBox="0 0 38 22" fill="none" stroke="currentColor" strokeWidth="2.5" strokeLinecap="round" strokeLinejoin="round">
                <path d="M1 19L19 2L37 19" />
              </svg>
            </button>
          </div>

          <div className="grid grid-cols-2 rounded-t-[72px] bg-white pt-[85px] pb-[72px] pl-2">
            <Stat value="117" unit="min" label="Cleaning Time" />
            <Stat value="38" unit="m²" label="Cleaning Area" />
          </div>
        </section>
      </main>

      <nav className="grid h-[144px] grid-cols-3 items-center justify-items-center bg-[#F5F5F5] pt-[6px] pr-20 pl-[92px] text-[#909090]">
        <button aria-label="Recent apps">
          <svg width="44" height="50" viewBox="0 0 44 50" stroke="currentColor" strokeWidth="4" strokeLinecap="round">
            <path d="M3 4V46M22 4V46M41 4V46" />
          </svg>
        </button>
        <button aria-label="Home">
          <svg width="50" height="50" viewBox="0 0 50 50" fill="none" stroke="currentColor" strokeWidth="4">
            <rect x="3" y="3" width="44" height="44" rx="15" />
          </svg>
        </button>
        <button aria-label="Back">
          <svg width="34" height="50" viewBox="0 0 34 50" fill="none" stroke="currentColor" strokeWidth="4" strokeLinecap="round" strokeLinejoin="round">
            <path d="M30 3L4 25L30 47" />
          </svg>
        </button>
      </nav>
    </div>
  )
}
